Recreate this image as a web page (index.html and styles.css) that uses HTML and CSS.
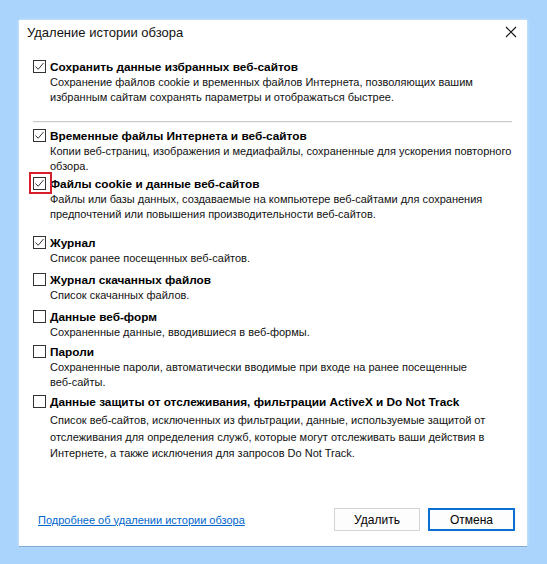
FILE: index.html
```html
<!DOCTYPE html>
<html lang="ru">
<head>
    <meta charset="UTF-8">
    <meta name="viewport" content="width=device-width, initial-scale=1.0">
    <title>Удаление истории обзора</title>
    <link rel="stylesheet" href="styles.css">
</head>
<body>

    <div class="dialog">
        <!-- Заголовок окна -->
        <div class="titlebar">
            <span class="title">Удаление истории обзора</span>
            <svg class="close" width="12" height="12" viewBox="0 0 12 12">
                <path d="M1 1 L11 11 M11 1 L1 11" stroke="#111" stroke-width="1.1" fill="none"/>
            </svg>
        </div>

        <div class="content">
            <!-- Избранное -->
            <div class="option">
                <div class="option-head">
                    <span class="box checked"><svg viewBox="0 0 13 13"><path d="M2.5 6.5 L5.2 9.3 L10.5 3" stroke="#333" stroke-width="1" fill="none"/></svg></span>
                    <span class="label">Сохранить данные избранных веб-сайтов</span>
                </div>
                <p class="desc">Сохранение файлов cookie и временных файлов Интернета, позволяющих вашим избранным сайтам сохранять параметры и отображаться быстрее.</p>
            </div>

            <div class="separator"></div>

            <div class="option compact">
                <div class="option-head">
                    <span class="box checked"><svg viewBox="0 0 13 13"><path d="M2.5 6.5 L5.2 9.3 L10.5 3" stroke="#333" stroke-width="1" fill="none"/></svg></span>
                    <span class="label">Временные файлы Интернета и веб-сайтов</span>
                </div>
                <p class="desc">Копии веб-страниц, изображения и медиафайлы, сохраненные для ускорения повторного обзора.</p>
            </div>

            <div class="option group-end">
                <div class="option-head">
                    <span class="box checked marked"><svg viewBox="0 0 13 13"><path d="M2.5 6.5 L5.2 9.3 L10.5 3" stroke="#333" stroke-width="1" fill="none"/></svg></span>
                    <span class="label">Файлы cookie и данные веб-сайтов</span>
                </div>
                <p class="desc">Файлы или базы данных, создаваемые на компьютере веб-сайтами для сохранения предпочтений или повышения производительности веб-сайтов.</p>
            </div>

            <div class="option spaced">
                <div class="option-head">
                    <span class="box checked"><svg viewBox="0 0 13 13"><path d="M2.5 6.5 L5.2 9.3 L10.5 3" stroke="#333" stroke-width="1" fill="none"/></svg></span>
                    <span class="label">Журнал</span>
                </div>
                <p class="desc">Список ранее посещенных веб-сайтов.</p>
            </div>

            <div class="option spaced">
                <div class="option-head">
                    <span class="box"></span>
                    <span class="label">Журнал скачанных файлов</span>
                </div>
                <p class="desc">Список скачанных файлов.</p>
            </div>

            <div class="option">
                <div class="option-head">
                    <span class="box"></span>
                    <span class="label">Данные веб-форм</span>
                </div>
                <p class="desc">Сохраненные данные, вводившиеся в веб-формы.</p>
            </div>

            <div class="option">
                <div class="option-head">
                    <span class="box"></span>
                    <span class="label">Пароли</span>
                </div>
                <p class="desc">Сохраненные пароли, автоматически вводимые при входе на ранее посещенные <span class="nowrap">веб-сайты.</span></p>
            </div>

            <div class="option">
                <div class="option-head">
                    <span class="box"></span>
                    <span class="label">Данные защиты от отслеживания, фильтрации ActiveX и Do Not Track</span>
                </div>
                <p class="desc desc-wide">Список веб-сайтов, исключенных из фильтрации, данные, используемые защитой от отслеживания для определения служб, которые могут отслеживать ваши действия в Интернете, а также исключения для запросов Do Not Track.</p>
            </div>
        </div>

        <!-- Кнопки -->
        <div class="footer">
            <a class="help-link" href="#">Подробнее об удалении истории обзора</a>
            <div class="buttons">
                <button type="button" class="btn">Удалить</button>
                <button type="button" class="btn btn-default">Отмена</button>
            </div>
        </div>
    </div>

</body>
</html>
```

FILE: styles.css
```css
body {
    margin: 0;
    padding: 20px 0 0 19px;
    background-color: #aad4fb;
    font-family: "Liberation Sans", Arial, sans-serif;
    font-size: 12px;
    color: #000;
    height: 564px;
    box-sizing: border-box;
}
.dialog {
    width: 508px;
    height: 526px;
    background-color: #fff;
    display: flex;
    flex-direction: column;
    box-shadow: 0 1px 0 #7fa9d3, 0 0 3px rgba(255, 255, 255, 0.6);
}
.titlebar {
    height: 24px;
    display: flex;
    align-items: center;
    justify-content: space-between;
    padding: 0 8px 0 8px;
}
.title {
    font-size: 13px;
    color: #111;
}
.close {
    display: block;
    margin-right: 2px;
}
.content {
    padding: 14px 8px 0 14px;
}
.option {
    margin-bottom: 3px;
}
.option.compact {
    margin-bottom: 1px;
}
.option.spaced {
    margin-bottom: 5px;
}
.option.group-end {
    margin-bottom: 12px;
}
.option-head {
    display: flex;
    align-items: center;
    height: 17px;
}
.box {
    position: relative;
    width: 13px;
    height: 13px;
    box-sizing: border-box;
    border: 1px solid #333;
    background-color: #fff;
    margin-right: 4px;
    flex-shrink: 0;
}
.box svg {
    position: absolute;
    left: -1px;
    top: -1px;
    width: 13px;
    height: 13px;
}
/* красная рамка-выделение вокруг флажка */
.box.marked::after {
    content: "";
    position: absolute;
    left: -5px;
    top: -6px;
    width: 19px;
    height: 18px;
    border: 2px solid #d5202b;
}
.label {
    font-weight: bold;
    font-size: 11.8px;
}
.desc {
    margin: 0 0 0 17px;
    font-size: 11px;
    line-height: 15px;
    color: #111;
}
.desc-wide {
    margin-top: 2px;
    line-height: 16.5px;
}
.nowrap {
    white-space: nowrap;
}
.separator {
    margin: 16px 7px 4px 0;
    height: 1px;
    background-color: #c8c8c8;
    border-bottom: 1px solid #f4f4f4;
}
.footer {
    margin-top: auto;
    display: flex;
    align-items: center;
    justify-content: space-between;
    padding: 0 12px 15px 19px;
}
.help-link {
    font-size: 11px;
    color: #0066cc;
    text-decoration: underline;
}
.buttons {
    display: flex;
    gap: 8px;
}
.btn {
    width: 86px;
    height: 23px;
    box-sizing: border-box;
    border: 1px solid #d4d4d4;
    background-color: #fdfdfd;
    font-family: "Liberation Sans", Arial, sans-serif;
    font-size: 12px;
    color: #000;
    padding: 0;
}
.btn-default {
    width: 87px;
    border: 2px solid #0a6fd0;
}
```
